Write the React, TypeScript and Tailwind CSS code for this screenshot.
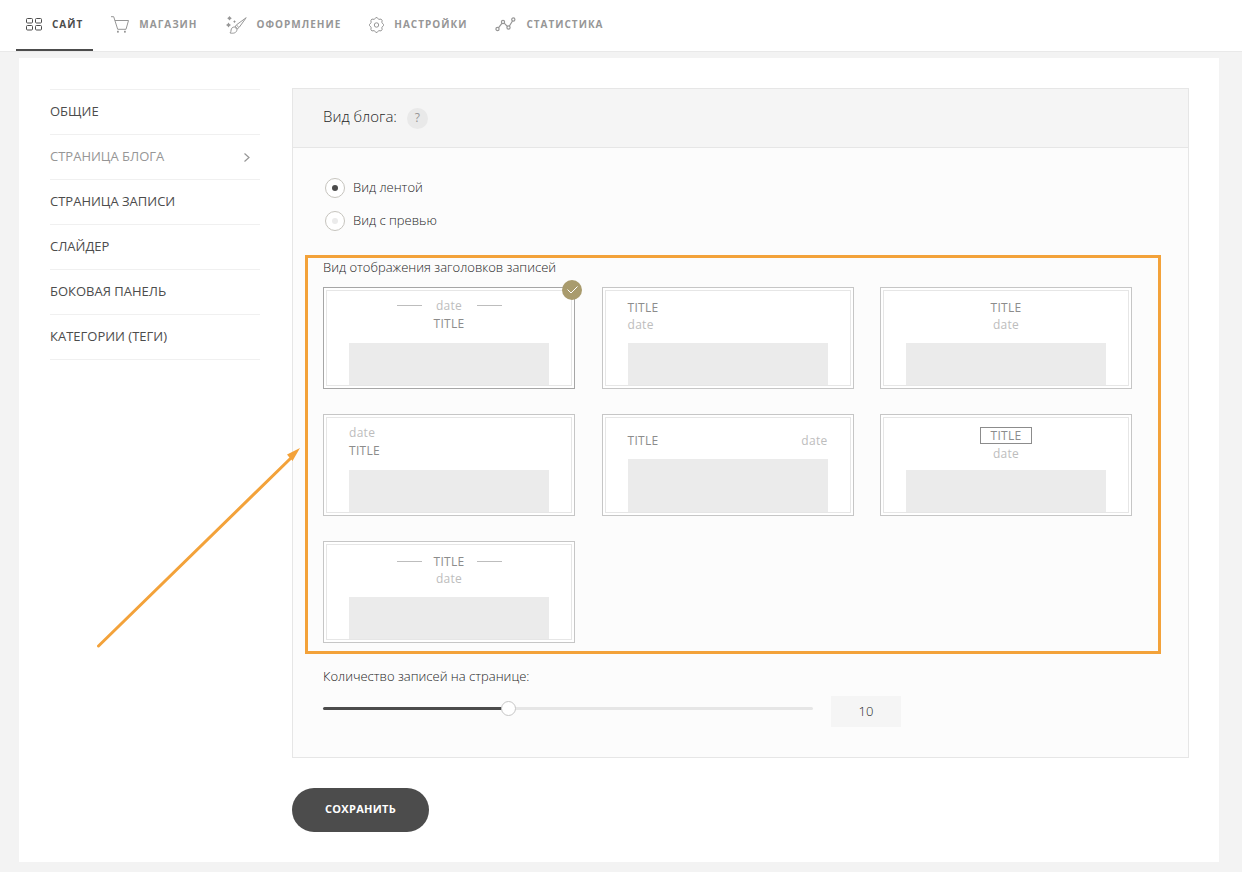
import { useState } from "react";
import type { ReactNode } from "react";
import clsx from "clsx";

interface INavItem {
    label: string;
    icon: ReactNode;
}

const SiteIcon = () => (
    <svg width="16" height="13" viewBox="0 0 16 13" fill="none" stroke="currentColor">
        <rect x="0.5" y="0.5" width="6" height="4.5" rx="1" />
        <rect x="9.5" y="0.5" width="6" height="4.5" rx="1" />
        <rect x="0.5" y="7.5" width="6" height="4.5" rx="1" />
        <rect x="9.5" y="7.5" width="6" height="4.5" rx="1" />
    </svg>
);

const CartIcon = () => (
    <svg width="18" height="17" viewBox="0 0 18 17" fill="none" stroke="currentColor">
        <path d="M0 0.700h2.700L6.700 13.300H15L17.500 4.500H3.900" />
        <rect x="6" y="14.800" width="1.800" height="1.800" fill="currentColor" stroke="none" />
        <rect x="13" y="14.800" width="1.800" height="1.800" fill="currentColor" stroke="none" />
    </svg>
);

const BrushIcon = () => (
    <svg width="21" height="18" viewBox="0 0 21 18" fill="none" stroke="currentColor" strokeLinejoin="round">
        <path d="M20.200 1.700L10.500 8.800 8.800 11.200l2.200 2L13.300 11.200z" />
        <path d="M10.600 9.200l2 1.900M9.200 10.600l2 1.800" />
        <path d="M8.600 11c-2 0-3.400 1.200-3.500 3 0 1.200-.4 2.200-1.100 2.900 3 .8 6.800.3 7-3.600" />
        <g fill="currentColor" stroke="none">
            <path d="M3.500 0l1 1.300 1.300 1-1.300 1-1 1.300-1-1.300-1.300-1 1.300-1z" />
            <path d="M2.500 6.500l1 1.500 1.500 1-1.500 1-1 1.500-1-1.500L0 9l1.500-1z" />
            <path d="M8.500 4.300l.6.700.7.600-.7.600-.6.700-.6-.7-.7-.6.700-.6z" />
        </g>
    </svg>
);

const GearIcon = () => (
    <svg width="15" height="16" viewBox="-7.5 -8 15 16" fill="none" stroke="currentColor" strokeLinejoin="round">
        <path d="M-0.700 -7.400H0.700Q1.700 -4.600 4.500 -5.900L5.600 -4.800Q4.400 -1.800 7 -0.700V0.700Q4.400 1.800 5.600 4.800L4.500 5.900Q1.700 4.600 0.700 7.400H-0.700Q-1.700 4.600 -4.500 5.900L-5.600 4.800Q-4.400 1.800 -7 0.700V-0.700Q-4.400 -1.800 -5.600 -4.800L-4.500 -5.900Q-1.700 -4.600 -0.700 -7.400z" />
        <circle r="2.200" />
    </svg>
);

const StatsIcon = () => (
    <svg width="21" height="15" viewBox="0 0 21 15" fill="none" stroke="currentColor" strokeWidth="1.200">
        <circle cx="2.500" cy="12" r="1.600" />
        <circle cx="8" cy="5" r="1.600" />
        <circle cx="13.500" cy="10.500" r="1.600" />
        <circle cx="18.300" cy="2.500" r="1.600" />
        <path d="M3.600 10.600l3.300-4.200M9.200 6.200l3.100 3.100M14.400 9l3.100-5" />
    </svg>
);

const navItems: INavItem[] = [
    { label: "САЙТ", icon: <SiteIcon /> },
    { label: "МАГАЗИН", icon: <CartIcon /> },
    { label: "ОФОРМЛЕНИЕ", icon: <BrushIcon /> },
    { label: "НАСТРОЙКИ", icon: <GearIcon /> },
    { label: "СТАТИСТИКА", icon: <StatsIcon /> },
];

const sections = [
    "ОБЩИЕ",
    "СТРАНИЦА БЛОГА",
    "СТРАНИЦА ЗАПИСИ",
    "СЛАЙДЕР",
    "БОКОВАЯ ПАНЕЛЬ",
    "КАТЕГОРИИ (ТЕГИ)",
];

const CardTitle = () => (
    <span className="text-[12px] leading-[17px] tracking-wide text-[#8c8c8c]">TITLE</span>
);

const CardDate = () => (
    <span className="text-[12px] leading-[17px] tracking-wide text-[#bdbdbd]">date</span>
);

const Dashed = ({ children }: { children: ReactNode }) => (
    <span className="flex items-center justify-center">
        <span className="h-px w-[25px] bg-[#bdbdbd]" />
        <span className="flex w-[55px] justify-center">{children}</span>
        <span className="h-px w-[25px] bg-[#bdbdbd]" />
    </span>
);

const titleViews: { id: string; head: ReactNode }[] = [
    {
        id: "date-lines",
        head: (
            <span className="flex h-[52px] flex-col items-center gap-px pt-[6px]">
                <Dashed><CardDate /></Dashed>
                <CardTitle />
            </span>
        ),
    },
    {
        id: "title-left",
        head: (
            <span className="flex h-[52px] flex-col items-start pt-2">
                <CardTitle />
                <CardDate />
            </span>
        ),
    },
    {
        id: "title-center",
        head: (
            <span className="flex h-[52px] flex-col items-center pt-2">
                <CardTitle />
                <CardDate />
            </span>
        ),
    },
    {
        id: "date-left",
        head: (
            <span className="flex h-[52px] flex-col items-start gap-px pt-[6px]">
                <CardDate />
                <CardTitle />
            </span>
        ),
    },
    {
        id: "inline",
        head: (
            <span className="flex h-[41px] justify-between pt-[14px]">
                <CardTitle />
                <CardDate />
            </span>
        ),
    },
    {
        id: "title-boxed",
        head: (
            <span className="flex h-[52px] flex-col items-center gap-px pt-[9px]">
                <span className="flex h-[17px] items-center border border-[#8c8c8c] px-[9px]">
                    <CardTitle />
                </span>
                <CardDate />
            </span>
        ),
    },
    {
        id: "title-lines",
        head: (
            <span className="flex h-[52px] flex-col items-center pt-2">
                <Dashed><CardTitle /></Dashed>
                <CardDate />
            </span>
        ),
    },
];

export default function App() {
    const [layout, setLayout] = useState("feed");
    const [titleView, setTitleView] = useState("date-lines");
    const [perPage, setPerPage] = useState(10);

    const min = 1;
    const max = 25;
    const percent = ((perPage - min) / (max - min)) * 100;

    return (
        <div className="min-h-screen bg-[#f3f3f3] pb-[10px] font-['Open_Sans',sans-serif] text-[#4c4c4c]">
            {/* Top navigation */}
            <header className="border-b border-[#e9e9e9] bg-white px-4">
                <nav className="flex gap-2">
                    {navItems.map((item, index) => (
                        <a
                            key={item.label}
                            href="#"
                            className={clsx(
                                "flex h-[51px] items-center gap-[10px] border-b-2 px-[10px] text-[10px] font-bold tracking-widest",
                                index === 0
                                    ? "border-[#4c4c4c] text-[#4c4c4c]"
                                    : "border-transparent text-[#969696]"
                            )}
                        >
                            {item.icon}
                            {item.label}
                        </a>
                    ))}
                </nav>
            </header>

            <div className="mt-[6px] mr-[23px] ml-[19px] flex items-start gap-8 bg-white py-[30px] pr-[30px] pl-[31px]">
                {/* Sections */}
                <nav className="mt-px w-[210px] shrink-0 border-t border-[#f0f0f0]">
                    {sections.map((section, index) => (
                        <a
                            key={section}
                            href="#"
                            className={clsx(
                                "flex h-[45px] items-center justify-between border-b border-[#f0f0f0] pr-[10px] text-[13px]",
                                index === 1 && "text-[#969696]"
                            )}
                        >
                            {section}
                            {index === 1 && (
                                <svg width="6" height="9" viewBox="0 0 6 9" fill="none" stroke="currentColor" strokeWidth="1.200">
                                    <path d="M0.500 0.500l4.500 4-4.500 4" />
                                </svg>
                            )}
                        </a>
                    ))}
                </nav>

                <main className="min-w-0 flex-1">
                    <section className="border border-[#e6e6e6] bg-[#fcfcfc] text-[#262626]">
                        <div className="flex h-[59px] items-center gap-[10px] border-b border-[#e6e6e6] bg-[#f5f5f5] px-[30px]">
                            <h1 className="pb-1 text-[15px] font-light">Вид блога:</h1>
                            <button
                                type="button"
                                className="size-[21px] rounded-full bg-[#e9e9e9] text-[12px] text-[#969696]"
                            >
                                ?
                            </button>
                        </div>

                        <div className="pt-[29px] pb-[30px]">
                            {/* Blog layout */}
                            <div className="flex flex-col items-start gap-3 px-8">
                                {[
                                    { id: "feed", label: "Вид лентой" },
                                    { id: "preview", label: "Вид с превью" },
                                ].map((option) => (
                                    <label key={option.id} className="flex items-center gap-2 text-[13px] leading-[21px] font-light">
                                        <input
                                            type="radio"
                                            name="layout"
                                            checked={layout === option.id}
                                            onChange={() => setLayout(option.id)}
                                            className="grid size-5 appearance-none place-items-center rounded-full border border-[#c6c4be] bg-white before:size-[6px] before:rounded-full before:bg-[#ebebeb] checked:before:bg-[#4c4c4c]"
                                        />
                                        {option.label}
                                    </label>
                                ))}
                            </div>

                            {/* Title view */}
                            <div
                                role="radiogroup"
                                aria-labelledby="title-view"
                                className="relative mt-6 mr-[27px] ml-3 border-[3px] border-[#f3a23a] pr-[26px] pb-2 pl-[15px]"
                            >
                                <h2 id="title-view" className="text-[13px] leading-[18px] font-light">
                                    Вид отображения заголовков записей
                                </h2>
                                <div className="mt-[11px] grid grid-cols-[repeat(auto-fill,252px)] justify-between gap-y-[25px]">
                                    {titleViews.map((view) => (
                                        <label
                                            key={view.id}
                                            className={clsx(
                                                "relative h-[102px] border bg-white p-[2px]",
                                                titleView === view.id ? "border-[#a6a6a6]" : "border-[#c6c6c6]"
                                            )}
                                        >
                                            <input
                                                type="radio"
                                                name="titleView"
                                                aria-label={view.id}
                                                checked={titleView === view.id}
                                                onChange={() => setTitleView(view.id)}
                                                className="sr-only"
                                            />
                                            <span className="flex h-full flex-col border border-[#e6e6e6] px-[22px]">
                                                {view.head}
                                                <span className="flex-1 bg-[#ebebeb]" />
                                            </span>
                                            {titleView === view.id && (
                                                <span className="absolute -top-2 -right-2 flex size-5 items-center justify-center rounded-full bg-[#a99b6d]">
                                                    <svg width="11" height="8" viewBox="0 0 11 8" fill="none" stroke="white">
                                                        <path d="M0.500 3.500l3.500 3.500 6.500-6.500" />
                                                    </svg>
                                                </span>
                                            )}
                                        </label>
                                    ))}
                                </div>

                                {/* Pointer arrow */}
                                <svg
                                    className="pointer-events-none absolute top-[190px] right-full"
                                    width="216"
                                    height="202"
                                    viewBox="0 0 216 202"
                                >
                                    <path d="M6.500 198L200 9" stroke="#f3a23a" strokeWidth="3" strokeLinecap="round" />
                                    <path d="M208 0L195 6.500l2 2.500 1.500 1.500 2 2.500z" fill="#f3a23a" />
                                </svg>
                            </div>

                            {/* Posts per page */}
                            <div className="mt-3 px-[30px]">
                                <label htmlFor="per-page" className="block text-[13px] leading-5 font-light">
                                    Количество записей на странице:
                                </label>
                                <div className="mt-[10px] flex h-[31px] gap-[18px]">
                                    <input
                                        id="per-page"
                                        type="range"
                                        min={min}
                                        max={max}
                                        value={perPage}
                                        onChange={(e) => setPerPage(Number(e.target.value))}
                                        className="mt-[11px] h-[3px] w-[490px] appearance-none rounded-full [&::-webkit-slider-thumb]:size-[15px] [&::-webkit-slider-thumb]:appearance-none [&::-webkit-slider-thumb]:rounded-full [&::-webkit-slider-thumb]:border [&::-webkit-slider-thumb]:border-[#c6c6c6] [&::-webkit-slider-thumb]:bg-white"
                                        style={{
                                            background: `linear-gradient(to right, #4c4c4c ${percent}%, #e6e6e6 ${percent}%)`,
                                        }}
                                    />
                                    <output
                                        htmlFor="per-page"
                                        className="flex w-[70px] items-center justify-center bg-[#f5f5f5] text-[13px] font-light"
                                    >
                                        {perPage}
                                    </output>
                                </div>
                            </div>
                        </div>
                    </section>

                    <button
                        type="button"
                        className="mt-[30px] h-11 w-[137px] rounded-full bg-[#4c4c4c] pb-[2px] text-[11px] font-bold tracking-wide text-white"
                    >
                        СОХРАНИТЬ
                    </button>
                </main>
            </div>
        </div>
    );
}
